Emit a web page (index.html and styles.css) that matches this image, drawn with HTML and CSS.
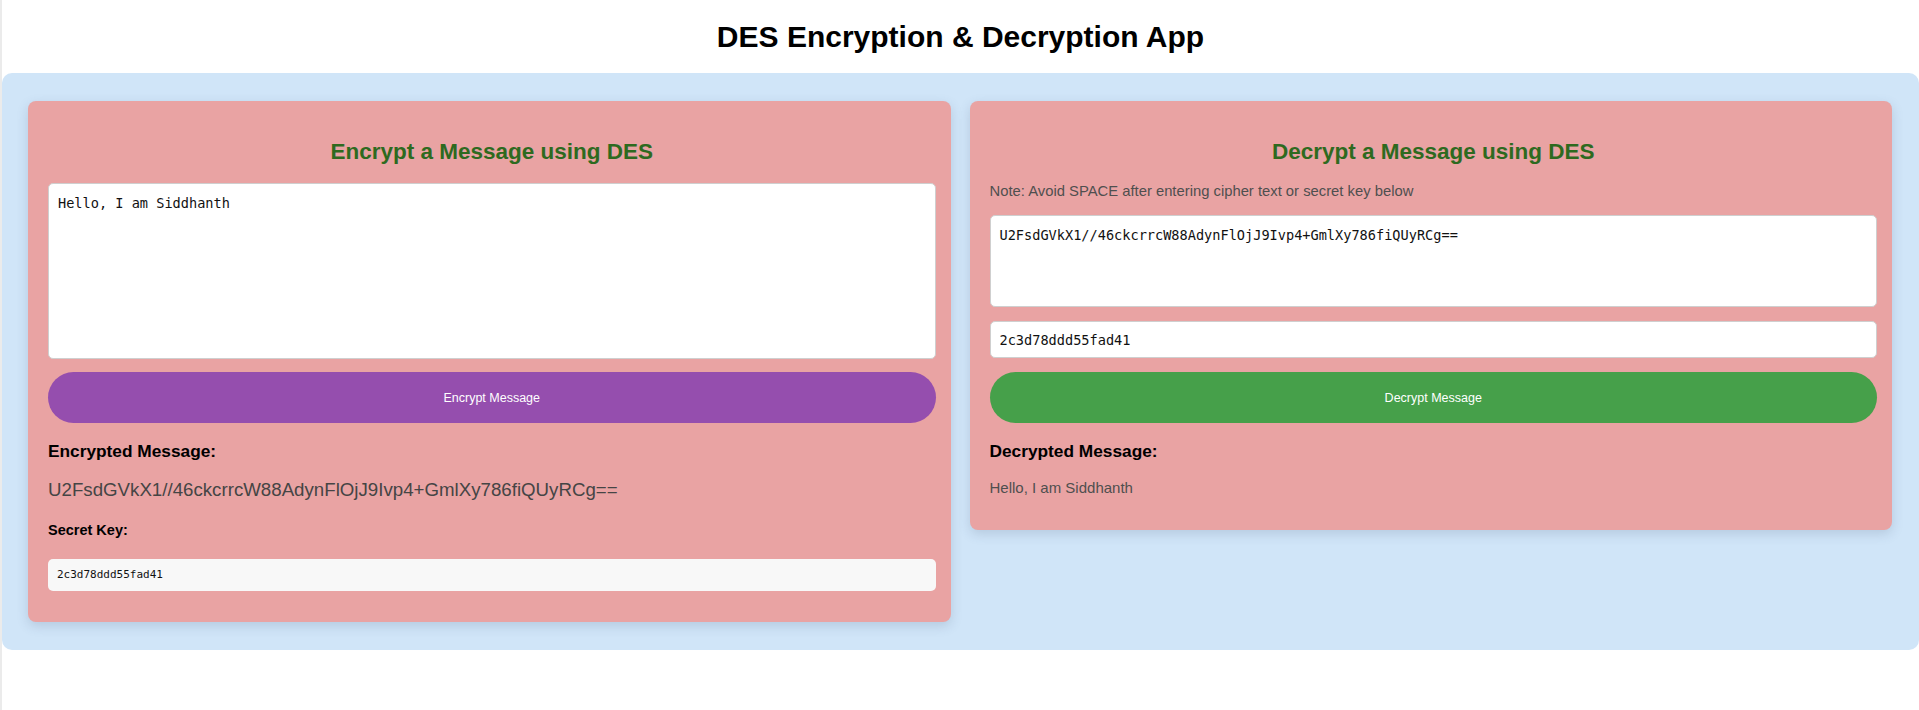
FILE: index.html
```html
<!DOCTYPE html>
<html lang="en">
<head>
<meta charset="utf-8">
<title>DES Encryption &amp; Decryption App</title>
<link rel="stylesheet" href="styles.css">
</head>
<body>
  <h1 class="title">DES Encryption &amp; Decryption App</h1>
  <main class="panel">
    <section class="card">
      <h2 class="card-title">Encrypt a Message using DES</h2>
      <textarea class="field field-tall">Hello, I am Siddhanth</textarea>
      <button class="btn btn-encrypt">Encrypt Message</button>
      <h3 class="result-title">Encrypted Message:</h3>
      <p class="cipher">U2FsdGVkX1//46ckcrrcW88AdynFlOjJ9Ivp4+GmlXy786fiQUyRCg==</p>
      <h4 class="key-title">Secret Key:</h4>
      <div class="key-box">2c3d78ddd55fad41</div>
    </section>
    <section class="card">
      <h2 class="card-title">Decrypt a Message using DES</h2>
      <p class="note">Note: Avoid SPACE after entering cipher text or secret key below</p>
      <textarea class="field field-short">U2FsdGVkX1//46ckcrrcW88AdynFlOjJ9Ivp4+GmlXy786fiQUyRCg==</textarea>
      <input class="field field-input" type="text" value="2c3d78ddd55fad41">
      <button class="btn btn-decrypt">Decrypt Message</button>
      <h3 class="result-title">Decrypted Message:</h3>
      <p class="plain">Hello, I am Siddhanth</p>
    </section>
  </main>
</body>
</html>
```
FILE: styles.css
```css
html, body {
  margin: 0;
  padding: 0;
  background: #ffffff;
}

body {
  font-family: "Liberation Sans", Arial, sans-serif;
  border-left: 2px solid #ebebeb;
  min-height: 710px;
  box-sizing: border-box;
}

.title {
  margin: 0;
  padding: 20px 0 19px;
  text-align: center;
  font-size: 30px;
  line-height: 34px;
  font-weight: bold;
  color: #000;
}

.panel {
  display: grid;
  grid-template-columns: 1fr 1fr;
  gap: 19px;
  align-items: start;
  background: #d0e5f8;
  border-radius: 10px;
  padding: 28px 27px 28px 26px;
}

.card {
  background: #e9a3a3;
  border-radius: 8px;
  padding: 20px 15px 20px 20px;
  box-shadow: 0 4px 12px rgba(60, 80, 110, 0.18);
  display: flex;
  flex-direction: column;
}

.card-title {
  margin: 18px 0 18px;
  text-align: center;
  font-size: 22.5px;
  line-height: 26px;
  font-weight: bold;
  color: #2e6a1f;
}

.field {
  display: block;
  box-sizing: border-box;
  width: 100%;
  margin: 0;
  border: 1px solid #cfcfcf;
  border-radius: 5px;
  background: #ffffff;
  font-family: "DejaVu Sans Mono", monospace;
  font-size: 13.6px;
  color: #111;
  resize: none;
  outline: none;
}

.field-tall {
  height: 176px;
  padding: 11px 9px;
  margin-bottom: 13px;
}

.field-short {
  height: 92px;
  padding: 11px 9px;
  margin-bottom: 14px;
}

.field-input {
  height: 37px;
  padding: 0 9px;
  margin-bottom: 14px;
}

.btn {
  display: block;
  width: 100%;
  height: 51px;
  border: none;
  border-radius: 26px;
  color: #ffffff;
  font-family: "Liberation Sans", Arial, sans-serif;
  font-size: 12.5px;
  margin: 0 0 18px;
  cursor: pointer;
}

.btn-encrypt {
  background: #954eae;
}

.btn-decrypt {
  background: #46a04a;
}

.result-title {
  margin: 0 0 18px;
  font-size: 17.3px;
  line-height: 20px;
  font-weight: bold;
  color: #000;
}

.cipher {
  margin: 0 0 21px;
  font-size: 18.7px;
  line-height: 21.5px;
  color: #454545;
}

.key-title {
  margin: 0 0 20px;
  font-size: 14.5px;
  line-height: 17px;
  font-weight: bold;
  color: #000;
}

.key-box {
  display: flex;
  align-items: center;
  height: 32px;
  box-sizing: border-box;
  padding: 0 9px;
  margin-bottom: 11px;
  background: #f8f8f8;
  border-radius: 5px;
  font-family: "DejaVu Sans Mono", monospace;
  font-size: 11px;
  color: #111;
}

.note {
  margin: 0 0 15px;
  font-size: 14.8px;
  line-height: 17px;
  color: #4f4f4f;
}

.plain {
  margin: 0 0 14px;
  font-size: 15px;
  line-height: 17px;
  color: #4f4f4f;
}
```
